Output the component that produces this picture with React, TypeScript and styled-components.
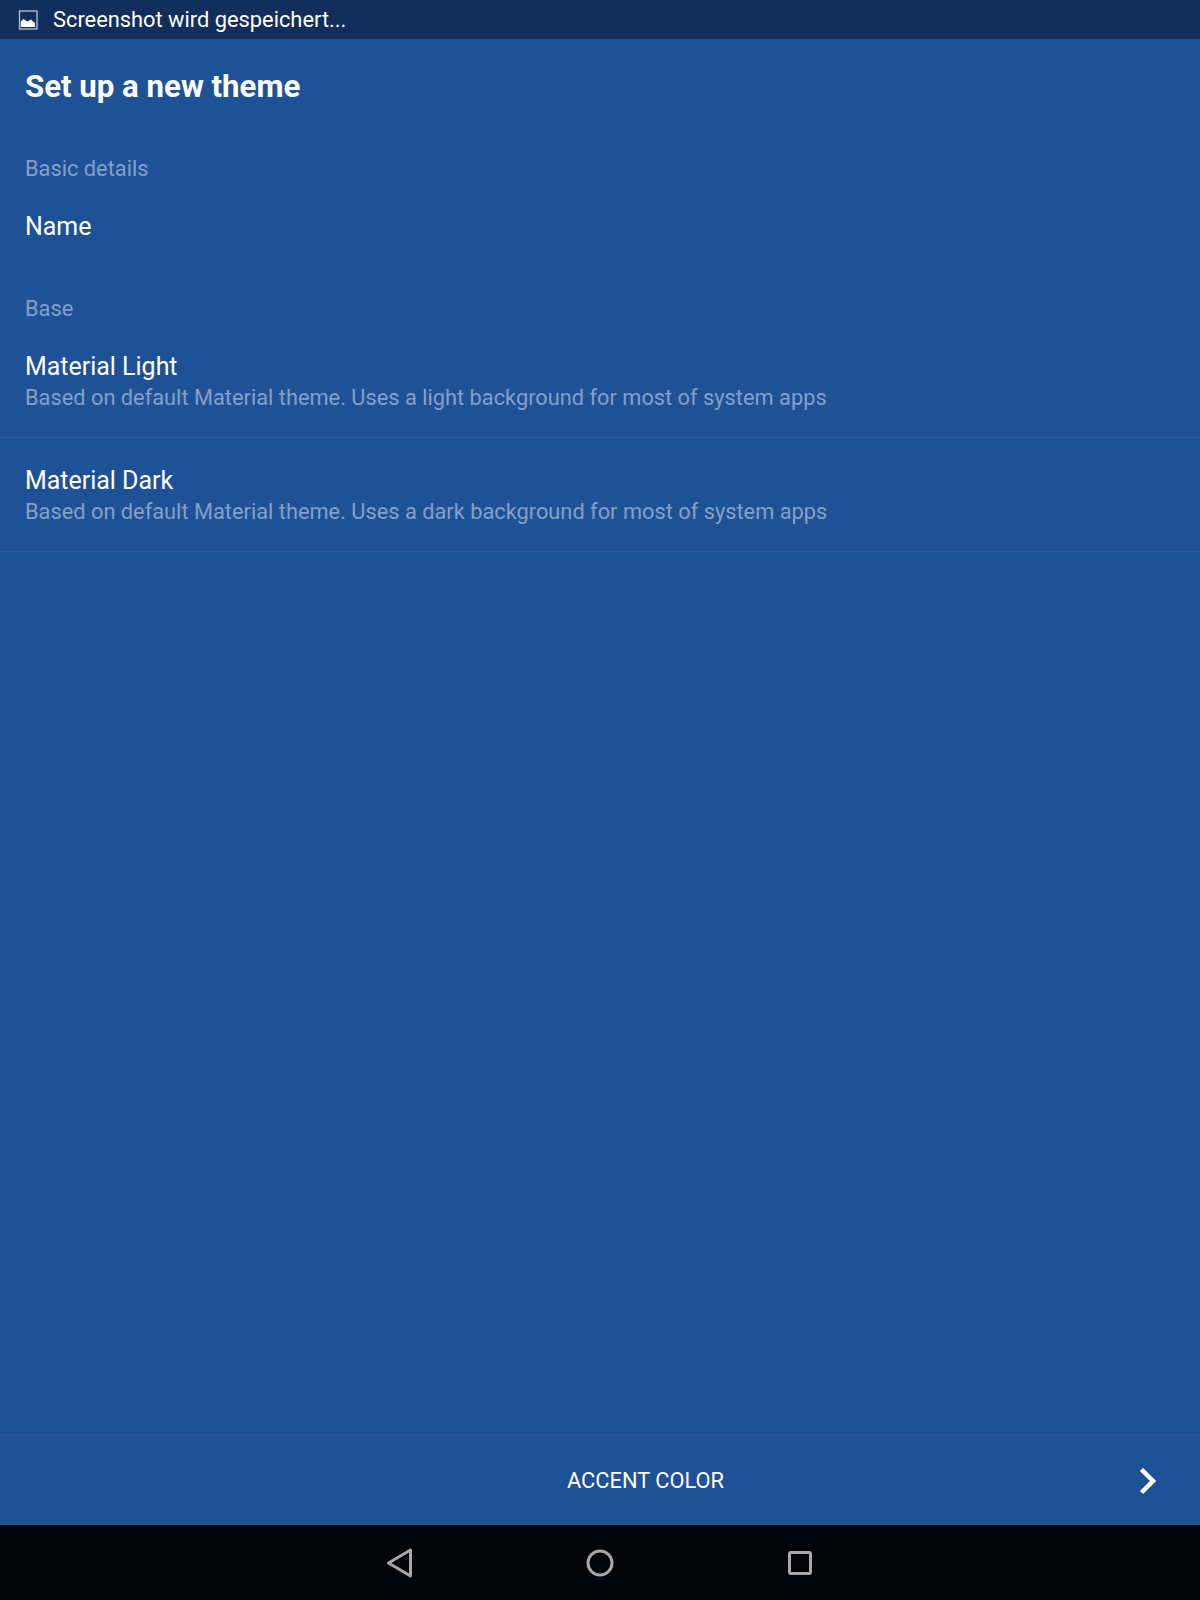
import styled, { createGlobalStyle } from 'styled-components'

const GlobalStyle = createGlobalStyle`
    html, body {
        margin: 0;
        padding: 0;
        background: #1f5196;
    }
    #root {
        width: 1200px;
        height: 1600px;
    }
`

const Screen = styled.div`
    width: 1200px;
    height: 1600px;
    display: flex;
    flex-direction: column;
    background: #1f5196;
    color: #ffffff;
    font-family: Roboto, "Liberation Sans", sans-serif;
`

const StatusBar = styled.div`
    height: 39px;
    display: flex;
    align-items: center;
    padding-left: 18px;
    gap: 15px;
    background: #122e5c;
    font-size: 21.84px;
    flex-shrink: 0;
`

const Content = styled.div`
    flex: 1;
    display: flex;
    flex-direction: column;
`

const Title = styled.h1`
    margin: 0;
    padding: 30px 25px 0;
    height: 85px;
    font-size: 31.2px;
    line-height: 35px;
    font-weight: 700;
`

const SectionLabel = styled.div`
    padding: 0 25px;
    height: 30px;
    font-size: 21.8px;
    line-height: 30px;
    color: #83a0c8;
`

const NameRow = styled.div`
    padding: 0 25px;
    margin: 28px 0 52px;
    font-size: 24.96px;
    line-height: 30px;
`

const ThemeList = styled.div`
    display: flex;
    flex-direction: column;
`

const ThemeRow = styled.div`
    height: 114px;
    box-sizing: border-box;
    padding: 27px 25px 0;
    border-bottom: 1px solid #2f5c9d;
`

const ThemeName = styled.div`
    font-size: 24.96px;
    line-height: 32px;
`

const ThemeDesc = styled.div`
    font-size: 21.8px;
    line-height: 30px;
    color: #83a0c8;
`

const BottomBar = styled.div`
    height: 93px;
    flex-shrink: 0;
    display: flex;
    align-items: center;
    justify-content: space-between;
    box-sizing: border-box;
    border-top: 1px solid #1c4a8a;
    padding: 3px 41px 0 567px;
    font-size: 21.84px;
`

const NavBar = styled.div`
    height: 75px;
    flex-shrink: 0;
    display: flex;
    align-items: center;
    justify-content: center;
    gap: 160px;
    background: #02040a;
    color: #a8a8a8;
`

const NavIcon = styled.svg`
    width: 40px;
    height: 40px;
    fill: none;
    stroke: currentColor;
    stroke-width: 3;
    stroke-linejoin: round;
`

const themes = [
    { name: 'Material Light', desc: 'Based on default Material theme. Uses a light background for most of system apps' },
    { name: 'Material Dark', desc: 'Based on default Material theme. Uses a dark background for most of system apps' },
]

export default function App() {
    return (
        <>
            <GlobalStyle />
            <Screen>
                <StatusBar>
                    <svg width="20" height="20" viewBox="0 0 20 20">
                        <rect x="1.5" y="1" width="17.5" height="18" fill="none" stroke="#b9c4d6" strokeWidth="1.3" />
                        <path d="M2.8 17v-5.5l2.7-2.5 2.5 1.8 1.5.6 3.5-2 2 2 2 1.5V17z" fill="#ffffff" />
                    </svg>
                    <span>Screenshot wird gespeichert...</span>
                </StatusBar>
                <Content>
                    <Title>Set up a new theme</Title>
                    <SectionLabel>Basic details</SectionLabel>
                    <NameRow>Name</NameRow>
                    <SectionLabel>Base</SectionLabel>
                    <ThemeList>
                        {themes.map((theme) => (
                            <ThemeRow key={theme.name}>
                                <ThemeName>{theme.name}</ThemeName>
                                <ThemeDesc>{theme.desc}</ThemeDesc>
                            </ThemeRow>
                        ))}
                    </ThemeList>
                </Content>
                <BottomBar>
                    <span>ACCENT COLOR</span>
                    <svg width="20" height="28" viewBox="0 0 20 28">
                        <path d="M2.5 2.5L14 14 2.5 25.5" fill="none" stroke="#ffffff" strokeWidth="4.5" />
                    </svg>
                </BottomBar>
                <NavBar>
                    <NavIcon viewBox="0 0 40 40">
                        <path d="M8.5 20L30.5 7v26z" />
                    </NavIcon>
                    <NavIcon viewBox="0 0 40 40">
                        <circle cx="20" cy="20" r="12" />
                    </NavIcon>
                    <NavIcon viewBox="0 0 40 40">
                        <rect x="9.5" y="9.5" width="21" height="21" rx="1.5" />
                    </NavIcon>
                </NavBar>
            </Screen>
        </>
    )
}
